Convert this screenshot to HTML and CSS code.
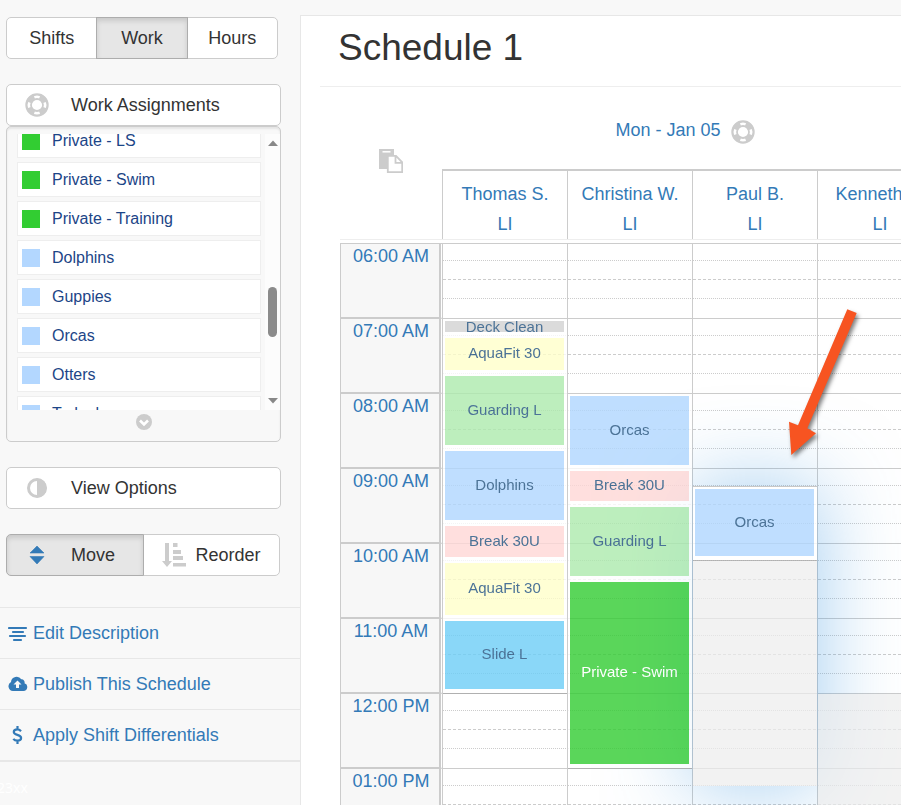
FILE: index.html
```html
<!DOCTYPE html>
<html lang="en">
<head>
  <meta charset="UTF-8">
  <meta name="viewport" content="width=device-width, initial-scale=1.0">
  <title>Schedule 1</title>
  <link rel="stylesheet" href="styles.css">
</head>
<body>
  <svg class="defs" width="0" height="0" aria-hidden="true">
    <symbol id="life-ring" viewBox="0 0 24 24">
      <g fill="none" stroke="currentColor">
        <circle cx="12" cy="12" r="10.6" stroke-width="2.2"/>
        <circle cx="12" cy="12" r="6" stroke-width="1.8"/>
        <circle cx="12" cy="12" r="8.3" stroke-width="5.6" pathLength="8" stroke-dasharray="1.16 0.84" stroke-dashoffset="-0.42"/>
      </g>
    </symbol>
  </svg>

  <aside class="sidebar">
    <div class="tools">
      <div class="btn-group tabs">
        <button type="button" class="btn">Shifts</button>
        <button type="button" class="btn active">Work</button>
        <button type="button" class="btn">Hours</button>
      </div>

      <div class="assignments">
        <button type="button" class="btn btn-block">
          <svg class="icon" width="24" height="24"><use href="#life-ring"/></svg>
          Work Assignments
        </button>
        <div class="well">
          <div class="scroll-box">
            <ul class="work-list">
              <li><span class="swatch green"></span>Private - LS</li>
              <li><span class="swatch green"></span>Private - Swim</li>
              <li><span class="swatch green"></span>Private - Training</li>
              <li><span class="swatch"></span>Dolphins</li>
              <li><span class="swatch"></span>Guppies</li>
              <li><span class="swatch"></span>Orcas</li>
              <li><span class="swatch"></span>Otters</li>
              <li><span class="swatch"></span>Tadpoles</li>
            </ul>
            <div class="scrollbar">
              <svg width="10" height="6" viewBox="0 0 10 6"><path d="M0 6L5 0.500L10 6z" fill="#888"/></svg>
              <span class="thumb"></span>
              <svg width="10" height="6" viewBox="0 0 10 6"><path d="M0 0L5 5.500L10 0z" fill="#888"/></svg>
            </div>
          </div>
          <button type="button" class="more" aria-label="Show more">
            <svg width="16" height="16" viewBox="0 0 16 16"><circle cx="8" cy="8" r="8" fill="#ccc"/><path d="M4 6.500l4 4 4-4" fill="none" stroke="#fff" stroke-width="2.600"/></svg>
          </button>
        </div>
      </div>

      <button type="button" class="btn btn-block">
        <svg class="icon" width="24" height="24" viewBox="0 0 24 24"><circle cx="12" cy="12" r="8.500" fill="none" stroke="currentColor" stroke-width="3"/><path d="M12 2.500a9.500 9.500 0 0 1 0 19z" fill="currentColor"/></svg>
        View Options
      </button>

      <div class="btn-group order">
        <button type="button" class="btn active">
          <svg class="icon blue" width="24" height="24" viewBox="0 0 24 24"><path d="M5 10L12 3l7 7zM5 13.500h14L12 21z" fill="currentColor" stroke="currentColor" stroke-width="0.600" stroke-linejoin="round"/></svg>
          Move
        </button>
        <button type="button" class="btn">
          <svg class="icon" width="24" height="24" viewBox="0 0 24 24"><path d="M3 0h4v18h3l-5 6-5-6h3zM11 0h4.500v4H11zM11 7h8v4h-8zM11 13h10v4H11zM11 20h13v3.500H11z" fill="currentColor"/></svg>
          Reorder
        </button>
      </div>
    </div>

    <nav class="links">
      <a href="#edit">
        <svg width="20" height="20" viewBox="0 0 20 20"><path d="M1 5h17M5 9h10M2 13h15M6 17h7" fill="none" stroke="currentColor" stroke-width="2.200" stroke-linecap="round"/></svg>
        Edit Description
      </a>
      <a href="#publish">
        <svg width="20" height="18" viewBox="0 0 20 18"><path d="M5 16a4.800 4.800 0 0 1-2-9A5.600 5.600 0 0 1 13.300 4.300a3 3 0 0 1 3.200 3.900A4 4 0 0 1 15.500 16zM8 13h3V9.500h2.500L9.500 5.500l-4 4H8z" fill="currentColor" fill-rule="evenodd"/></svg>
        Publish This Schedule
      </a>
      <a href="#differentials">
        <svg width="20" height="18" viewBox="0 0 20 18"><path d="M13 5.200C12 4 10.700 3.400 9.300 3.400 7.300 3.400 5.800 4.400 5.800 6c0 3.800 7.300 2 7.300 6 0 1.700-1.600 2.700-3.800 2.700-1.700 0-3-.6-4-1.900M9.500 0v3.400M9.500 14.700V18" fill="none" stroke="currentColor" stroke-width="2.200"/></svg>
        Apply Shift Differentials
      </a>
    </nav>
    <div class="version">23xx</div>
  </aside>

  <main class="content">
    <h1>Schedule 1</h1>

    <div class="schedule">
      <table class="staff">
        <tr>
          <td class="corner" rowspan="2">
            <svg width="24" height="24" viewBox="0 0 24 24"><path d="M0 0h15v6H8v14H0z" fill="#ccc"/><path d="M3.500 2.800h8" stroke="#fff" stroke-width="1.500"/><path d="M8.800 6.800h8.200l6.200 6.500v9.900H8.800zM16.500 6.800v7h6.700" fill="#fff" stroke="#ccc" stroke-width="1.800"/></svg>
          </td>
          <th class="date" colspan="4">
            <a href="#day">Mon - Jan 05</a>
            <svg width="24" height="24"><use href="#life-ring"/></svg>
          </th>
        </tr>
        <tr>
          <th class="person"><a href="#thomas">Thomas S.<br>LI</a></th>
          <th class="person"><a href="#christina">Christina W.<br>LI</a></th>
          <th class="person"><a href="#paul">Paul B.<br>LI</a></th>
          <th class="person"><a href="#kenneth">Kenneth B.<br>LI</a></th>
        </tr>
      </table>

      <div class="grid">
        <table class="hours">
          <tr><th>06:00 AM</th><td></td><td></td><td></td><td></td></tr>
          <tr><th>07:00 AM</th><td></td><td></td><td></td><td></td></tr>
          <tr><th>08:00 AM</th><td></td><td></td><td></td><td></td></tr>
          <tr><th>09:00 AM</th><td></td><td></td><td></td><td></td></tr>
          <tr><th>10:00 AM</th><td></td><td></td><td></td><td></td></tr>
          <tr><th>11:00 AM</th><td></td><td></td><td></td><td></td></tr>
          <tr><th>12:00 PM</th><td></td><td></td><td></td><td></td></tr>
          <tr><th>01:00 PM</th><td></td><td></td><td></td><td></td></tr>
        </table>

        <!-- one grid row per quarter hour, row 1 is 06:00 -->
        <div class="shifts">
          <div class="day">
            <div class="shift" style="grid-row: 5 / 6"><span class="deck">Deck Clean</span></div>
            <div class="shift" style="grid-row: 6 / 8"><span class="aquafit">AquaFit 30</span></div>
            <div class="shift" style="grid-row: 8 / 12"><span class="guarding">Guarding L</span></div>
            <div class="shift" style="grid-row: 12 / 16"><span class="lesson">Dolphins</span></div>
            <div class="shift" style="grid-row: 16 / 18"><span class="break">Break 30U</span></div>
            <div class="shift" style="grid-row: 18 / 21"><span class="aquafit">AquaFit 30</span></div>
            <div class="shift last" style="grid-row: 21 / 25"><span class="slide">Slide L</span></div>
          </div>
          <div class="day">
            <div class="shift" style="grid-row: 9 / 13"><span class="lesson">Orcas</span></div>
            <div class="shift" style="grid-row: 13 / 15"><span class="break">Break 30U</span></div>
            <div class="shift" style="grid-row: 15 / 19"><span class="guarding">Guarding L</span></div>
            <div class="shift last" style="grid-row: 19 / 29"><span class="private">Private - Swim</span></div>
          </div>
          <div class="day">
            <div class="drop-target" style="grid-row: 14 / 30"></div>
            <div class="shift first last" style="grid-row: 14 / 18"><span class="lesson">Orcas</span></div>
            <div class="off" style="grid-row: 18 / 30"></div>
          </div>
          <div class="day">
            <div class="off" style="grid-row: 25 / 33"></div>
          </div>
        </div>

        <svg class="arrow" width="90" height="165" viewBox="0 0 90 165"><path d="M67.300 6.300L76.700 10 27.300 125.300l8.700 5L11.300 152 9 118.700l9 3.600z" fill="#f75421"/></svg>
      </div>
    </div>
  </main>
</body>
</html>
```
FILE: styles.css
```css
* {
  box-sizing: border-box;
}
body {
  margin: 0;
  display: flex;
  height: 100vh;
  overflow: hidden;
  background-color: #f8f8f8;
  font-family: "Liberation Sans", Arial, sans-serif;
  font-size: 18px;
  line-height: 24px;
  color: #333;
}
a {
  color: #337ab7;
  text-decoration: none;
}
svg {
  flex: none;
}
.defs {
  position: absolute;
}

/* sidebar */
.sidebar {
  flex: none;
  width: 300px;
  padding-top: 17px;
}
.tools {
  display: flex;
  flex-direction: column;
  gap: 25px;
  padding: 0 19px 0 6px;
}
.btn {
  display: flex;
  align-items: center;
  height: 42px;
  padding: 0 18px;
  border: 1px solid #ccc;
  border-radius: 5px;
  background-color: #fff;
  color: #333;
  font: inherit;
  cursor: pointer;
}
.btn.active {
  background-color: #e6e6e6;
  border-color: #adadad;
  box-shadow: inset 0 3px 5px rgba(0, 0, 0, 0.125);
  z-index: 1;
}
.btn-block {
  width: 100%;
}
.btn .icon {
  color: #ccc;
  margin-right: 22px;
}
.btn .icon.blue {
  color: #337ab7;
}
.btn-group {
  display: flex;
}
.btn-group .btn {
  flex: 1;
}
.btn-group .btn + .btn {
  margin-left: -1px;
  border-top-left-radius: 0;
  border-bottom-left-radius: 0;
}
.btn-group .btn:not(:last-child) {
  border-top-right-radius: 0;
  border-bottom-right-radius: 0;
}
.tabs {
  margin-right: 3px;
}
.tabs .btn {
  justify-content: center;
}
.order {
  margin-right: 1px;
}
.order .btn + .btn .icon {
  margin-right: 10px;
}
.well {
  height: 316px;
  padding: 7px 0 0 10px;
  border: 1px solid #ccc;
  border-radius: 5px;
  box-shadow: inset 0 2px 2px rgba(0, 0, 0, 0.08);
}
.scroll-box {
  display: flex;
  justify-content: space-between;
  height: 276px;
  overflow: hidden;
}
.work-list {
  flex: 1;
  list-style: none;
  margin: -11px 0 0;
  padding: 0;
  font-size: 16px;
  color: #1c4587;
}
.work-list li {
  display: flex;
  align-items: center;
  height: 35px;
  margin-bottom: 4px;
  padding-left: 4px;
  border: 1px solid #eee;
  background-color: #fff;
}
.swatch {
  width: 18px;
  height: 18px;
  margin-right: 12px;
  background-color: #b3d7ff;
}
.swatch.green {
  background-color: #32cd32;
}
.scrollbar {
  display: flex;
  flex-direction: column;
  align-items: center;
  justify-content: space-between;
  width: 15px;
  margin-left: 4px;
  padding: 6px 0;
  background-color: #fcfcfc;
}
.thumb {
  width: 9px;
  height: 50px;
  margin-top: 80px;
  border-radius: 5px;
  background-color: #8b8b8b;
}
.more {
  display: block;
  margin: 4px auto 0;
  padding: 0 10px 0 0;
  border: none;
  background: none;
  line-height: 16px;
}
.links {
  margin-top: 31px;
  border-bottom: 1px solid #e7e7e7;
}
.links a {
  display: flex;
  align-items: center;
  gap: 5px;
  height: 51px;
  padding-left: 8px;
  border-top: 1px solid #e7e7e7;
}
.links a:last-child {
  height: 52px;
  border-bottom: 1px solid #e7e7e7;
}
.version {
  margin: 14px 0 0 -3px;
  font-family: "Noto Sans", sans-serif;
  font-size: 14px;
  color: #fff;
}

/* schedule */
.content {
  flex: 1;
  min-width: 0;
  margin-top: 15px;
  padding-left: 19px;
  overflow: hidden;
  border: solid #e7e7e7;
  border-width: 1px 0 0 1px;
  background-color: #fff;
}
h1 {
  margin: 0;
  padding: 10px 18px 16px;
  border-bottom: 1px solid #eee;
  font-size: 37px;
  font-weight: normal;
  line-height: 44px;
}
.schedule {
  padding: 6px 0 0 20px;
}
table {
  table-layout: fixed;
  width: 602px;
  border-spacing: 0;
}
th,
td {
  padding: 0;
  font-weight: normal;
}
.staff {
  border-bottom: 1px solid #eee;
}
.corner {
  width: 102px;
  padding-bottom: 10px;
  text-align: center;
  line-height: 0;
}
.date {
  height: 76px;
  padding-right: 14px;
}
.date svg {
  margin-left: 5px;
  vertical-align: middle;
  color: #ccc;
}
.person {
  height: 70px;
  padding-top: 8px;
  border: solid #ccc;
  border-width: 2px 0 0 1px;
  line-height: 30px;
}
.corner svg {
  vertical-align: middle;
}
.grid {
  position: relative;
  margin-top: 3px;
}
.hours {
  border-top: 1px solid #ccc;
}
.hours th {
  width: 102px;
  height: 75px;
  border: solid #ccc;
  border-width: 0 0 2px 1px;
  border-right: 1px solid #fff;
  box-shadow: inset -2px 0 #ccc;
  background-color: #f7f7f7;
  color: #337ab7;
  vertical-align: top;
}
/* dotted quarter lines with a dashed half-hour line */
.hours td {
  border: solid #ccc;
  border-width: 0 0 1px 1px;
  background-image:
    repeating-linear-gradient(90deg, #ccc 0 1px, transparent 1px 2px),
    repeating-linear-gradient(90deg, #ccc 0 3px, transparent 3px 5px),
    repeating-linear-gradient(90deg, #ccc 0 1px, transparent 1px 2px);
  background-size: 100% 1px;
  background-position: 0 16px, 0 35px, 0 54px;
  background-repeat: no-repeat;
}
.shifts {
  position: absolute;
  top: 1px;
  left: 102px;
  display: grid;
  grid-template-columns: repeat(4, 125px);
}
.day {
  display: grid;
  grid-template-columns: 1fr;
  grid-template-rows: repeat(8, 17px 19px 19px 20px);
  padding-left: 1px;
}
.day > div {
  grid-column: 1;
}
.shift {
  display: flex;
  padding: 2px 3px 4px 2px;
  background-color: #fff;
  opacity: 0.8;
  font-size: 15px;
  line-height: 12px;
  color: #20517e;
}
.shift span {
  flex: 1;
  display: flex;
  align-items: center;
  justify-content: center;
  padding-bottom: 2px;
}
.shift.last {
  border-bottom: 1px solid #aaa;
}
.shift.first {
  border-top: 1px solid #bbb;
}
.shift .deck {
  padding-bottom: 0;
  background-color: #d3d3d3;
}
.aquafit {
  background-color: #ffffca;
}
.guarding {
  background-color: #adebad;
}
.lesson {
  background-color: #b0d7ff;
}
.break {
  background-color: #ffd8d6;
}
.slide {
  background-color: #6dcef7;
}
.private {
  background-color: #32cd32;
  color: #fff;
}
.drop-target {
  box-shadow: 0 0 85px rgba(66, 153, 225, 0.5);
}
.off {
  background-color: rgba(237, 237, 237, 0.7);
}
.arrow {
  position: absolute;
  top: 60px;
  left: 440px;
  filter: drop-shadow(2px 3px 2px rgba(0, 0, 0, 0.5));
}
```
